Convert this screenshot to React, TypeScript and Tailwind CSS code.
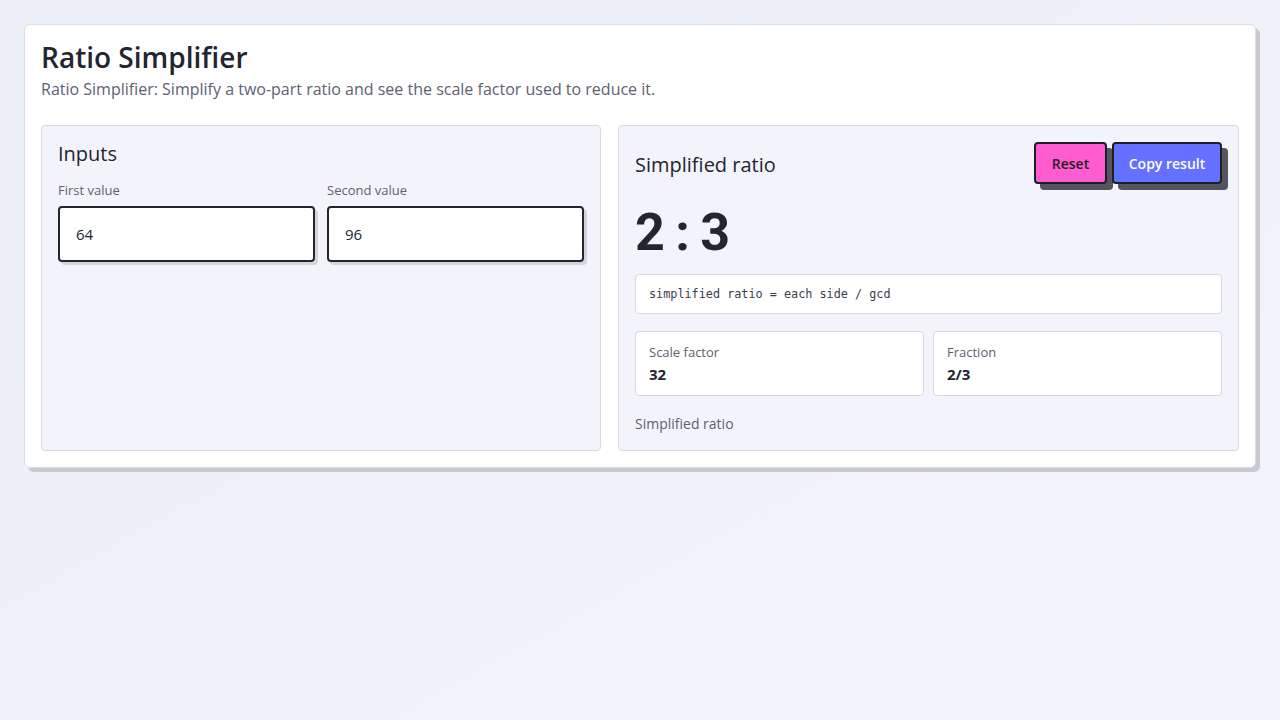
import { useState, type JSX } from "react";

function gcd(a: number, b: number): number {
  a = Math.abs(a);
  b = Math.abs(b);
  while (b) {
    const t = b;
    b = a % b;
    a = t;
  }
  return a || 1;
}

export default function App(): JSX.Element {
  const [first, setFirst] = useState<string>("64");
  const [second, setSecond] = useState<string>("96");

  const a = Number(first) || 0;
  const b = Number(second) || 0;
  const g = gcd(a, b);
  const left = a / g;
  const right = b / g;

  return (
    <div className="min-h-screen w-full bg-gradient-to-br from-[#eceef8] to-[#f3f4fb] p-6 font-['Open_Sans','Noto_Sans',sans-serif] text-[#232530]">
      <div className="rounded-md border border-[#dcdde4] bg-white p-4 shadow-[4px_4px_0_#c9cacf]">
        {/* Header */}
        <h1 className="-mt-[2px] text-[28px] font-semibold leading-9">Ratio Simplifier</h1>
        <p className="mt-[2px] text-[16px] leading-6 text-[#5d6170]">
          Ratio Simplifier: Simplify a two-part ratio and see the scale factor used to reduce it.
        </p>

        <div className="mt-[24px] grid grid-cols-[560px_1fr] gap-[17px]">
          {/* Inputs */}
          <section className="h-[326px] rounded border border-[#d8d9e0] bg-[#f3f4fb] p-4">
            <h2 className="-mt-[2px] text-[20px] font-medium leading-7">Inputs</h2>
            <div className="mt-[12px] grid grid-cols-2 gap-3">
              <label className="flex flex-col">
                <span className="text-[13px] leading-5 text-[#5d6170]">First value</span>
                <input
                  value={first}
                  onChange={(e) => setFirst(e.target.value)}
                  className="mt-[6px] h-[56px] w-full rounded border-2 border-[#22252f] bg-white px-4 text-[15px] text-[#232530] shadow-[3px_3px_0_#d4d5da] outline-none"
                />
              </label>
              <label className="flex flex-col">
                <span className="text-[13px] leading-5 text-[#5d6170]">Second value</span>
                <input
                  value={second}
                  onChange={(e) => setSecond(e.target.value)}
                  className="mt-[6px] h-[56px] w-full rounded border-2 border-[#22252f] bg-white px-4 text-[15px] text-[#232530] shadow-[3px_3px_0_#d4d5da] outline-none"
                />
              </label>
            </div>
          </section>

          {/* Result */}
          <section className="rounded border border-[#d8d9e0] bg-[#f3f4fb] px-4 pt-4 pb-4">
            <div className="flex items-center justify-between">
              <h2 className="pt-[4px] text-[20px] font-medium leading-7">Simplified ratio</h2>
              <div className="flex gap-[5px]">
                <button
                  onClick={() => {
                    setFirst("64");
                    setSecond("96");
                  }}
                  className="h-[42px] w-[73px] rounded border-2 border-[#1d1f27] bg-[#ff5ccf] text-[14px] font-semibold text-[#1d1f27] shadow-[6px_6px_0_#55565d]"
                >
                  Reset
                </button>
                <button className="h-[42px] w-[110px] rounded border-2 border-[#1d1f27] bg-[#6470ff] text-[14px] font-semibold text-white shadow-[6px_6px_0_#55565d]">
                  Copy result
                </button>
              </div>
            </div>

            <div className="mt-[17px] font-['Roboto',sans-serif] text-[52px] font-bold leading-[64px] tracking-tight">
              {left} : {right}
            </div>

            <div className="mt-[9px] rounded border border-[#d8d9e0] bg-white px-[13px] py-[11px] font-['DejaVu_Sans_Mono',monospace] text-[11.8px] leading-4 text-[#3a3d48]">
              simplified ratio = each side / gcd
            </div>

            <div className="mt-[17px] grid grid-cols-2 gap-[9px]">
              <div className="h-[65px] rounded border border-[#d8d9e0] bg-white px-[13px] pt-[10px]">
                <div className="text-[13px] leading-5 text-[#5d6170]">Scale factor</div>
                <div className="text-[15px] font-bold leading-6">{g}</div>
              </div>
              <div className="h-[65px] rounded border border-[#d8d9e0] bg-white px-[13px] pt-[10px]">
                <div className="text-[13px] leading-5 text-[#5d6170]">Fraction</div>
                <div className="text-[15px] font-bold leading-6">
                  {left}/{right}
                </div>
              </div>
            </div>

            <p className="mt-[18px] text-[14px] leading-5 text-[#5d6170]">Simplified ratio</p>
          </section>
        </div>
      </div>
    </div>
  );
}
